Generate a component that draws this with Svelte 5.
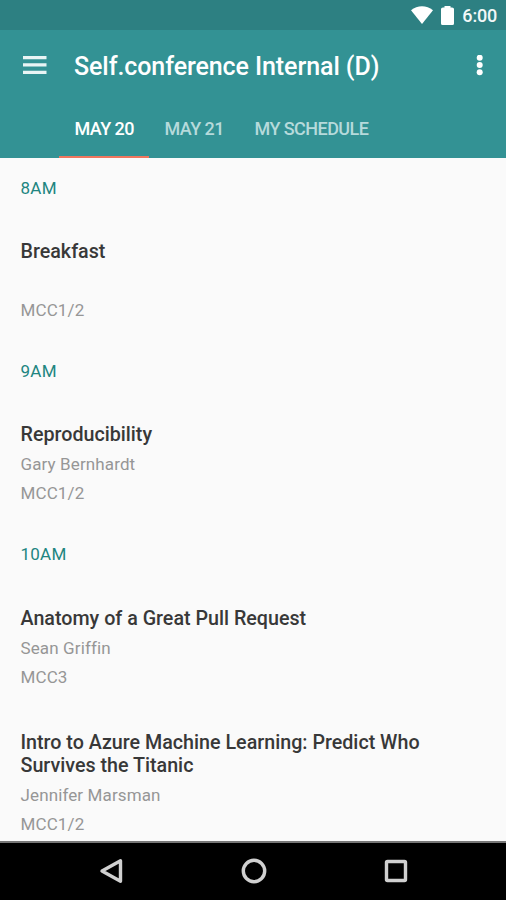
<script>
	const tabs = ['May 20', 'May 21', 'My Schedule'];
	let current = $state(0);

	const schedule = [
		{ time: '8AM', sessions: [{ title: 'Breakfast', speaker: '', room: 'MCC1/2' }] },
		{
			time: '9AM',
			sessions: [{ title: 'Reproducibility', speaker: 'Gary Bernhardt', room: 'MCC1/2' }]
		},
		{
			time: '10AM',
			sessions: [
				{ title: 'Anatomy of a Great Pull Request', speaker: 'Sean Griffin', room: 'MCC3' },
				{
					title: 'Intro to Azure Machine Learning: Predict Who Survives the Titanic',
					speaker: 'Jennifer Marsman',
					room: 'MCC1/2'
				}
			]
		}
	];
</script>

<div class="screen">
	<div class="status">
		<svg class="wifi" width="22" height="18" viewBox="0 0 22 18">
			<path d="M0 4.2C6.5-1.2 15.5-1.2 22 4.2L11 18z" />
		</svg>
		<svg class="battery" width="13" height="19" viewBox="0 0 13 19">
			<path d="M3.500 0h6v1.500H11Q13 1.500 13 3v14.500q0 1.500-1.500 1.500h-10Q0 19 0 17.500V3Q0 1.500 2 1.500h1.500z" />
		</svg>
		<span class="clock">6:00</span>
	</div>

	<header>
		<div class="toolbar">
			<button class="menu" aria-label="Menu">
				<svg width="24" height="19" viewBox="0 0 24 19">
					<path d="M0 0h23.500v3.300H0zM0 7.300h23.500v3.300H0zM0 14.700h23.500v3.300H0z" />
				</svg>
			</button>
			<h1>Self.conference Internal (D)</h1>
			<button class="more" aria-label="More">
				<svg width="8" height="22" viewBox="0 0 8 22">
					<circle cx="3.700" cy="2.700" r="3" />
					<circle cx="3.700" cy="10" r="3" />
					<circle cx="3.700" cy="17.300" r="3" />
				</svg>
			</button>
		</div>
		<nav>
			{#each tabs as tab, i}
				<button class="tab" class:active={current === i} onclick={() => (current = i)}>{tab}</button>
			{/each}
		</nav>
	</header>

	<main>
		{#each schedule as slot}
			<h2>{slot.time}</h2>
			{#each slot.sessions as session}
				<article>
					<h3>{session.title}</h3>
					<p>{session.speaker}</p>
					<p>{session.room}</p>
				</article>
			{/each}
		{/each}
	</main>

	<footer>
		<svg width="26" height="28" viewBox="0 0 26 28">
			<path d="M4 14L22.500 3.800v20.400z" />
		</svg>
		<svg width="28" height="28" viewBox="0 0 28 28">
			<circle cx="14" cy="14" r="10.700" />
		</svg>
		<svg width="26" height="28" viewBox="0 0 26 28">
			<rect x="3.500" y="4.500" width="19" height="19" rx="1" />
		</svg>
	</footer>
</div>

<style>
	:global(body) {
		margin: 0;
	}

	.screen {
		display: flex;
		flex-direction: column;
		width: 506px;
		height: 900px;
		overflow: hidden;
		background: #fafafa;
		font-family: Roboto, sans-serif;
	}

	button {
		display: flex;
		padding: 0;
		border: 0;
		background: none;
		color: inherit;
		font: inherit;
	}

	h1,
	h2,
	h3,
	p {
		margin: 0;
	}

	.status {
		display: flex;
		flex: none;
		align-items: center;
		justify-content: flex-end;
		box-sizing: border-box;
		height: 30px;
		padding-right: 9px;
		background: #2d8082;
		color: #f2f8f8;
		fill: #fff;
	}

	.battery {
		margin: 0 8px 0 8px;
	}

	.clock {
		font-size: 18px;
		font-weight: 500;
		letter-spacing: -0.2px;
		line-height: 30px;
		padding-top: 2px;
	}

	header {
		flex: none;
		height: 127.5px;
		background: #339294;
		color: #fff;
	}

	.toolbar {
		display: flex;
		align-items: center;
		height: 71px;
		padding: 0 22px 0 23px;
		fill: #e9f5f5;
	}

	h1 {
		flex: 1;
		margin-left: 27px;
		padding-top: 1px;
		font-size: 25px;
		font-weight: 500;
		letter-spacing: -0.08px;
		white-space: nowrap;
	}

	.more {
		fill: #fff;
	}

	nav {
		display: flex;
		height: 56.5px;
		padding-left: 59px;
	}

	.tab {
		box-sizing: border-box;
		height: 56.5px;
		padding: 2px 15px 0 15.5px;
		border-bottom: 2.5px solid transparent;
		align-items: center;
		color: #b6dadb;
		font-size: 18px;
		font-weight: 500;
		letter-spacing: -0.55px;
		line-height: 54px;
		text-transform: uppercase;
		white-space: nowrap;
	}

	.tab.active {
		border-bottom-color: #f0765e;
		color: #fff;
	}

	main {
		flex: 1;
		min-height: 0;
		overflow: hidden;
	}

	h2 {
		height: 59.3px;
		color: #218580;
		font-size: 17px;
		font-weight: 400;
		letter-spacing: 0.25px;
		line-height: 61px;
	}

	h2,
	article {
		padding-left: 20.5px;
	}

	article {
		padding: 23px 70px 21.1px 20.5px;
	}

	h3 {
		color: #383838;
		font-size: 19.7px;
		font-weight: 500;
		line-height: 23px;
	}

	p {
		height: 20px;
		margin-top: 9px;
		color: #969696;
		font-size: 17px;
		letter-spacing: 0.12px;
		line-height: 20px;
	}

	h3 + p {
		margin-top: 8px;
	}

	footer {
		display: flex;
		flex: none;
		align-items: center;
		justify-content: space-between;
		box-sizing: border-box;
		height: 59px;
		padding: 0 97px 2px 98px;
		border-top: 2px solid #777;
		background: #000;
	}

	footer svg {
		fill: none;
		stroke: #d0d0d0;
		stroke-width: 3.4;
		stroke-linejoin: round;
	}
</style>
